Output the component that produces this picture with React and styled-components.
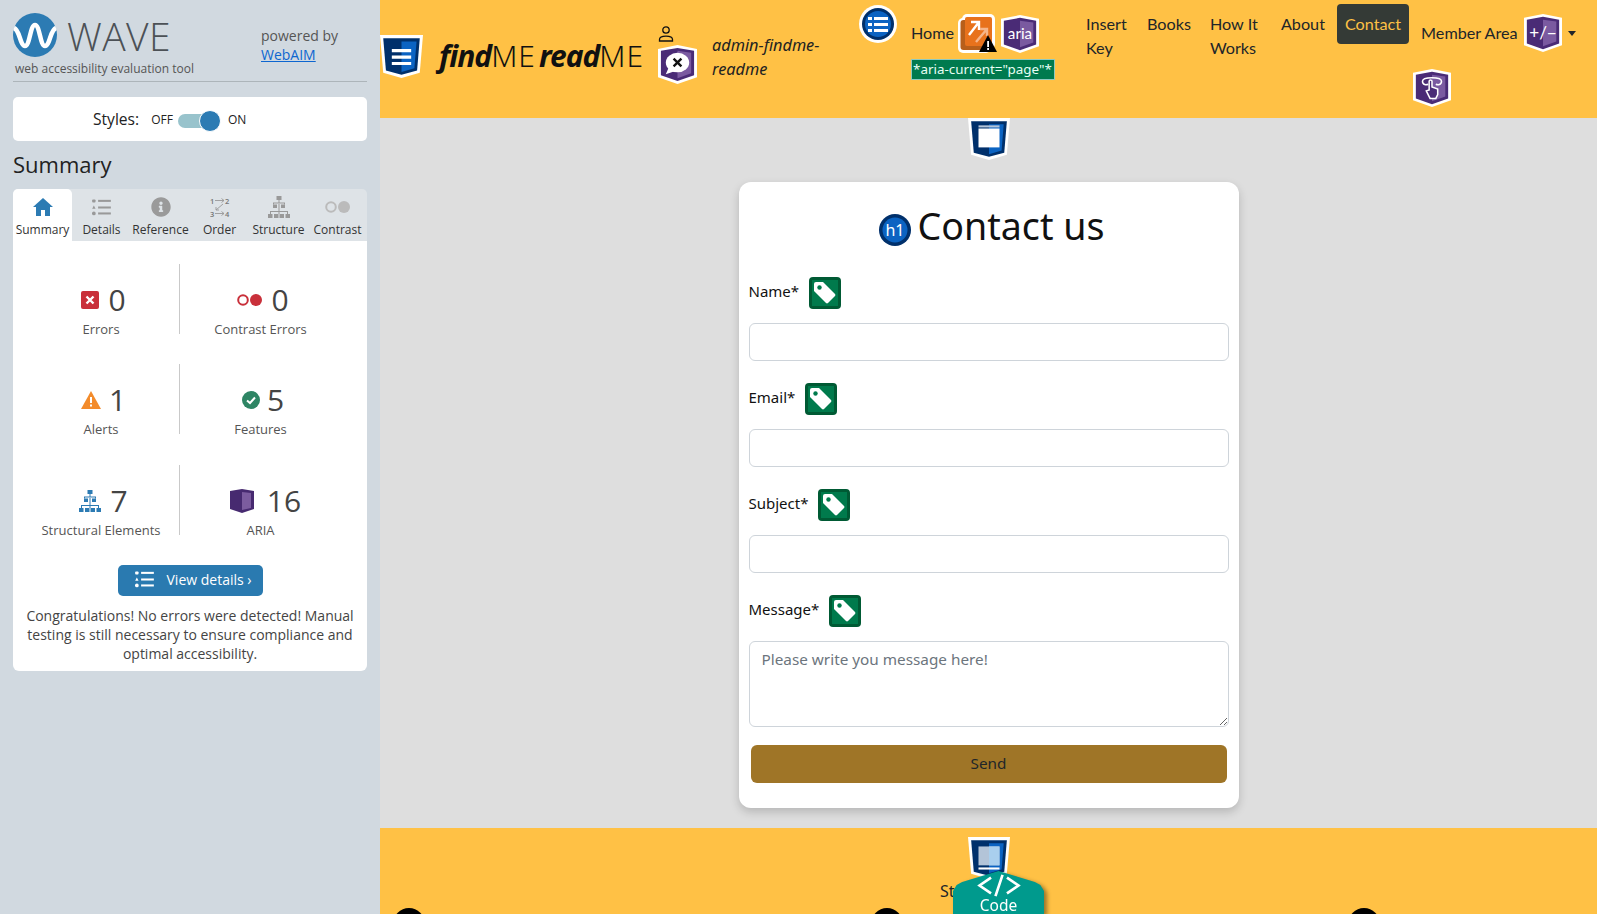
import React from 'react';
import styled, { createGlobalStyle } from 'styled-components';
import { FaInfoCircle } from 'react-icons/fa';

const GlobalStyle = createGlobalStyle`
    html, body {
        margin: 0;
        padding: 0;
        height: 914px;
        overflow: hidden;
    }
    * { box-sizing: border-box; }
    svg { flex-shrink: 0; }
`;

const Page = styled.div`
    display: flex;
    width: 1597px;
    height: 914px;
    overflow: hidden;
`;

// WAVE sidebar
const Sidebar = styled.aside`
    width: 380px;
    flex-shrink: 0;
    padding: 13px 13px 0;
    background: #d1d9e0;
    font-family: "Open Sans", sans-serif;
    color: #333;
`;

const Masthead = styled.div`
    display: flex;
    height: 69px;
    border-bottom: 1px solid #adb5ba;
`;

const LogoBlock = styled.div`
    width: 248px;
`;

const LogoRow = styled.div`
    display: flex;
    align-items: center;
    gap: 10px;
    height: 44px;
`;

const WaveWord = styled.span`
    margin-top: 2px;
    font-size: 39px;
    font-weight: 300;
    line-height: 44px;
    letter-spacing: 0.4px;
    color: #4c5156;
`;

const Tagline = styled.div`
    margin: 3px 0 0 2px;
    font-size: 12px;
    line-height: 18px;
    color: #555;
`;

const Powered = styled.div`
    padding-top: 13px;
    font-size: 14px;
    line-height: 19px;
    color: #555;
`;

const PoweredLink = styled.a`
    display: block;
    color: #0d66d0;
    text-decoration: underline;
`;

const StylesBox = styled.div`
    display: flex;
    align-items: center;
    height: 44px;
    margin-top: 15px;
    padding-left: 80px;
    background: #fff;
    border-radius: 5px;
    color: #222;
`;

const StylesLabel = styled.span`
    font-size: 15.6px;
    margin-right: 12px;
`;

const SwitchText = styled.span`
    font-size: 12px;
`;

const SwitchTrack = styled.span`
    position: relative;
    width: 38px;
    height: 14px;
    margin: 3px 12px 0 5px;
    border-radius: 7px;
    background: #98c3cc;
`;

const SwitchKnob = styled.span`
    position: absolute;
    right: -5px;
    top: -4px;
    width: 22px;
    height: 22px;
    border: 1px solid #fff;
    border-radius: 50%;
    background: #2c7bb3;
`;

const PanelTitle = styled.h2`
    margin: 8px 0 10px;
    font-size: 22px;
    font-weight: 400;
    line-height: 30px;
    color: #222;
`;

const TabBar = styled.div`
    display: grid;
    grid-template-columns: repeat(6, 59px);
    height: 52px;
    background: #dee3e7;
    border-radius: 5px 5px 0 0;
`;

const Tab = styled.div`
    display: flex;
    flex-direction: column;
    align-items: center;
    background: ${p => (p.$active ? '#fff' : 'transparent')};
    border-radius: ${p => (p.$active ? '5px 5px 0 0' : '0')};
    white-space: nowrap;
`;

const TabIcon = styled.div`
    display: flex;
    align-items: center;
    justify-content: center;
    height: 26px;
    margin-top: 5px;
    color: #9a9a9a;
`;

const TabLabel = styled.span`
    margin-top: 1px;
    font-size: 12px;
    line-height: 18px;
    color: #333;
`;

const SummaryBody = styled.div`
    padding: 23px 0 8px;
    background: #fff;
    border-radius: 0 0 6px 6px;
`;

const StatGrid = styled.div`
    display: grid;
    grid-template-columns: 156px 162px;
    grid-auto-rows: 70px;
    row-gap: 30.3px;
    padding-left: 10px;
    margin-bottom: 0.4px;
`;

const StatCell = styled.div`
    display: flex;
    flex-direction: column;
    align-items: center;
    padding-top: 18px;
    border-left: ${p => (p.$divider ? '1px solid #c9c9c9' : 'none')};
`;

const StatValue = styled.div`
    display: flex;
    align-items: center;
    gap: ${p => p.$gap || 9}px;
    height: 36px;
    margin-left: ${p => p.$shift || 5}px;
    font-size: 30px;
    line-height: 36px;
    color: #444;
`;

const StatLabel = styled.div`
    margin-top: 2px;
    font-size: 13px;
    line-height: 18px;
    white-space: nowrap;
    color: #555;
`;

const DetailsButton = styled.button`
    display: flex;
    align-items: center;
    gap: 13px;
    width: 145px;
    height: 31px;
    margin: 30px auto 0;
    padding: 0 0 2px 17px;
    border: 0;
    border-radius: 5px;
    background: #2a7ab0;
    color: #fff;
    font-family: "Open Sans", sans-serif;
    font-size: 14px;
`;

const Congrats = styled.p`
    margin: 10px 0 0;
    padding: 0 10px;
    font-size: 14px;
    line-height: 19px;
    text-align: center;
    color: #444;
`;

// page under test
const Main = styled.main`
    flex: 1;
    min-width: 0;
    overflow: hidden;
    position: relative;
    background: #dedede;
    font-family: "Noto Sans", sans-serif;
    color: #212529;
`;

const Header = styled.header`
    display: flex;
    align-items: flex-start;
    height: 118px;
    background: #ffc145;
`;

const Brand = styled.div`
    display: flex;
    align-items: center;
    gap: 16px;
    width: 260px;
    height: 43px;
    margin-top: 35px;
`;

const BrandText = styled.span`
    margin-top: -3px;
    font-size: 30px;
    color: #111;
    white-space: nowrap;
`;

const BrandStrong = styled.b`
    font-style: italic;
    font-weight: 700;
    letter-spacing: -1px;
    margin-left: ${p => p.$gap || 0}px;
`;

const BrandLight = styled.span`
    font-weight: 300;
    letter-spacing: 1px;
`;

const UserBlock = styled.div`
    display: flex;
    width: 201px;
    margin: 26px 0 0 18px;
`;

const UserIcons = styled.div`
    display: flex;
    flex-direction: column;
    gap: 3px;
    width: 54px;
`;

const UserName = styled.em`
    width: 125px;
    margin-top: 7px;
    font-size: 16.3px;
    line-height: 24px;
    color: #222;
`;

const Nav = styled.nav`
    display: flex;
    align-items: flex-start;
    font-family: Lato, sans-serif;
    font-size: 16.2px;
    line-height: 24px;
    color: #212529;
`;

const ListBadge = styled.span`
    margin: 5px 14px 0 0;
    display: flex;
`;

const HomeItem = styled.div`
    display: flex;
    flex-direction: column;
    align-items: flex-start;
    width: 144px;
    margin-right: 23px;
    padding-top: 14px;
`;

const HomeRow = styled.div`
    display: flex;
    align-items: center;
    gap: 4px;
`;

const NavText = styled.span`
    margin-top: -1px;
`;

const CurrentTag = styled.span`
    margin-top: 6px;
    padding: 0 1px;
    height: 21px;
    width: 144px;
    background: #007a4e;
    border: 1px solid #8fc9c0;
    color: #e8fff5;
    font-family: "Noto Sans", sans-serif;
    font-size: 13.4px;
    line-height: 18px;
    white-space: nowrap;
`;

const NavLink = styled.a`
    display: block;
    max-width: ${p => p.$maxWidth || 'none'};
    padding: 12px 8px 0;
    margin-right: 3px;
`;

const ContactLink = styled.a`
    height: 40px;
    margin: 4px 0 0 1px;
    padding: 8px 8px 0;
    border-radius: 4px;
    background: #343a36;
    color: #ffc145;
`;

const MemberItem = styled.div`
    position: relative;
    display: flex;
    align-items: center;
    gap: 6px;
    margin: 14px 0 0 12px;
    white-space: nowrap;
`;

const TouchBadge = styled.span`
    position: absolute;
    left: -8px;
    top: 55px;
    display: flex;
`;

const Caret = styled.span`
    width: 0;
    height: 0;
    border-top: 5px solid #212529;
    border-left: 4px solid transparent;
    border-right: 4px solid transparent;
`;

const ContactSection = styled.section`
    display: flex;
    flex-direction: column;
    align-items: center;
    height: 710px;
`;

const Card = styled.div`
    width: 500px;
    height: 626px;
    margin-top: 22px;
    padding: 0 10px;
    background: #fff;
    border-radius: 12px;
    box-shadow: 0 4px 10px rgba(0, 0, 0, 0.18);
`;

const Title = styled.h1`
    display: flex;
    align-items: center;
    justify-content: center;
    gap: 7px;
    height: 95px;
    margin: 0;
    padding: 0 0 8px 6px;
    font-size: 37.6px;
    font-weight: 400;
    color: #111;
`;

const TitleBadge = styled.span`
    display: flex;
    margin-top: 9px;
`;

const FieldGroup = styled.div`
    margin-bottom: 22px;
`;

const LabelRow = styled.div`
    display: flex;
    align-items: center;
    gap: 10px;
    height: 32px;
    margin-bottom: 14px;
`;

const LabelText = styled.label`
    margin-top: -4px;
    font-size: 15px;
    color: #111;
`;

const TextInput = styled.input`
    display: block;
    width: 480px;
    height: 38px;
    border: 1px solid #ced4da;
    border-radius: 6px;
    background: #fff;
`;

const MessageInput = styled.textarea`
    display: block;
    width: 480px;
    height: 86px;
    padding: 6px 12px;
    border: 1px solid #ced4da;
    border-radius: 6px;
    font-family: "Noto Sans", sans-serif;
    font-size: 15.3px;
    line-height: 23px;
    &::placeholder { color: #6c757d; opacity: 1; }
`;

const SendButton = styled.button`
    display: block;
    width: 476px;
    height: 38px;
    margin: -4px 0 0 2px;
    padding: 0 0 2px;
    border: 0;
    border-radius: 6px;
    background: #9f7527;
    color: #212529;
    font-family: "Noto Sans", sans-serif;
    font-size: 15.3px;
`;

const Footer = styled.footer`
    display: flex;
    flex-direction: column;
    align-items: center;
    height: 200px;
    padding-top: 9px;
    background: #ffc145;
`;

const FooterHeading = styled.div`
    font-size: 16px;
    line-height: 24px;
    color: #212529;
    white-space: nowrap;
`;

const FooterColumns = styled.div`
    align-self: flex-start;
    display: grid;
    grid-template-columns: repeat(3, 477.5px);
    margin: 5px 0 0 13px;
`;

const SocialDot = styled.span`
    display: block;
    width: 32px;
    height: 32px;
    border-radius: 50%;
    background: #000;
`;

const CodeWrap = styled.div`
    position: absolute;
    left: 573px;
    top: 871px;
    width: 91px;
    height: 43px;
    filter: drop-shadow(3px 2px 2px rgba(0, 0, 0, 0.4));
`;

const CodeTab = styled.div`
    display: flex;
    flex-direction: column;
    align-items: center;
    height: 100%;
    padding-top: 3px;
    background: #009a8d;
    clip-path: polygon(50% 0, 90% 11px, 96% 14px, 100% 20px, 100% 100%, 0 100%, 0 20px, 4% 14px, 10% 11px);
    color: #fff;
    font-size: 15.5px;
    line-height: 17px;
`;

const Shield = ({ size = 38, dark, light, peak, children }) => (
    <svg width={size} height={size} viewBox="0 0 40 40">
        {peak ? (
            <>
                <path d="M0 4 L20 0 L40 4 V33 L20 40 L0 33Z" fill="#fff" />
                <path d="M3 6 L20 3 L37 6 V31 L20 37 L3 31Z" fill={dark} />
                <path d="M20 6 L34 8 V29 L20 34Z" fill={light} />
            </>
        ) : (
            <>
                <path d="M0 0 H40 L37 35 L20 40 L3 35Z" fill="#fff" />
                <path d="M3 3 H37 L34.5 33 L20 37 L5.5 33Z" fill={dark} />
                <path d="M20 6 H34 L32 31 L20 34.5Z" fill={light} />
            </>
        )}
        {children}
    </svg>
);

const Navy = { dark: '#00306b', light: '#0b63c2' };
const Purple = { dark: '#4a2b76', light: '#7a5aa0', peak: true };

const TagBadge = () => (
    <svg width="32" height="32" viewBox="0 0 32 32">
        <rect width="32" height="32" rx="4" fill="#005a34" />
        <rect x="3" y="3" width="26" height="26" fill="#007a4c" />
        <path d="M5 7 a2 2 0 0 1 2-2 h7 L26 17 a1.5 1.5 0 0 1 0 2 L19 26 a1.5 1.5 0 0 1 -2 0 L5 14Z" fill="#fff" />
        <circle cx="10.5" cy="10.5" r="2.2" fill="#007a4c" />
    </svg>
);

const Tree = ({ size = 22, color = '#999' }) => (
    <svg width={size} height={size} viewBox="0 0 22 22" fill={color}>
        <rect x="8.5" y="0" width="5" height="4" />
        <rect x="5" y="8.5" width="4" height="3.5" />
        <rect x="13" y="8.5" width="4" height="3.5" />
        <rect x="0" y="18" width="4.5" height="4" />
        <rect x="6" y="18" width="4.5" height="4" />
        <rect x="11.5" y="18" width="4.5" height="4" />
        <rect x="17.5" y="18" width="4.5" height="4" />
        <path d="M10.5 4 h1 v2.5 h5.5 v2 h-1 v-1 h-10 v1 h-1 v-2 h5.5z M2 15 h18 v3 h-1 v-2 h-7.5 v2 h-1 v-2 h-7.5 v2 h-1z M10.5 8 h1 v8 h-1z" />
    </svg>
);

const ListIcon = ({ color = '#999', width = 19, height = 17 }) => (
    <svg width={width} height={height} viewBox="0 0 22 20" fill={color}>
        <rect x="0" y="0.5" width="4" height="3.5" rx="1" />
        <rect x="7" y="1" width="15" height="2.4" />
        <path d="M2 7.5 L4 11.5 H0Z" />
        <rect x="7" y="8.8" width="15" height="2.4" />
        <circle cx="2" cy="17" r="2.2" />
        <rect x="7" y="15.8" width="15" height="2.4" />
    </svg>
);

const HomeIcon = () => (
    <svg width="20" height="18" viewBox="0 0 20 18" fill="#2c7bb3">
        <path d="M10 0 L20 9 H0Z" />
        <path d="M3 9 H17 V18 H12 V12 H8 V18 H3Z" />
    </svg>
);

const OrderIcon = () => (
    <svg width="20" height="20" viewBox="0 0 20 20" fontFamily="Open Sans, sans-serif" fontSize="7.5" fontWeight="600" fill="#777">
        <text x="0" y="6.5">1</text>
        <text x="15" y="6.5">2</text>
        <text x="0" y="19.5">3</text>
        <text x="15" y="19.5">4</text>
        <path d="M5 3.5 H14 M11.5 1.5 L14 3.5 L11.5 5.5 M5 16.5 H14 M11.5 14.5 L14 16.5 L11.5 18.5 M13 7 L6 13 M6 10 V13 H9" stroke="#999" strokeWidth="0.9" fill="none" />
    </svg>
);

const ContrastIcon = ({ color = '#bbb', colorFill = '#bbb', width = 25 }) => (
    <svg width={width} height={(width * 12) / 25} viewBox="0 0 25 12">
        <circle cx="6" cy="6" r="4.8" fill="none" stroke={color} strokeWidth="2" />
        <circle cx="19" cy="6" r="6" fill={colorFill} />
    </svg>
);

const WaveLogo = () => (
    <svg width="44" height="44" viewBox="0 0 44 44">
        <circle cx="22" cy="22" r="22" fill="#2c7bb3" />
        <path d="M1 15 C7 17 7 33 12 33 C17 33 17 12 22 12 C27 12 27 33 32 33 C37 33 37 17 43 15" stroke="#fff" strokeWidth="4.5" fill="none" />
    </svg>
);

const stats = [
    { value: 0, label: 'Errors', icon: (
        <svg width="18" height="18" viewBox="0 0 18 18">
            <rect width="18" height="18" rx="2" fill="#c9303a" />
            <path d="M5.5 5.5 L12.5 12.5 M12.5 5.5 L5.5 12.5" stroke="#fff" strokeWidth="2.4" />
        </svg>
    ) },
    { value: 0, label: 'Contrast Errors', divider: true, icon: <ContrastIcon color="#c9303a" colorFill="#c9303a" /> },
    { value: 1, label: 'Alerts', gap: 8, icon: (
        <svg width="20" height="18" viewBox="0 0 20 18">
            <path d="M10 0 L20 18 H0Z" fill="#f38b2b" />
            <rect x="9" y="6" width="2" height="6" fill="#fff" />
            <rect x="9" y="13.5" width="2" height="2" fill="#fff" />
        </svg>
    ) },
    { value: 5, label: 'Features', divider: true, gap: 7, icon: (
        <svg width="18" height="18" viewBox="0 0 18 18">
            <circle cx="9" cy="9" r="9" fill="#2e8564" />
            <path d="M5 9.5 L8 12 L13 6.5" stroke="#fff" strokeWidth="2" fill="none" />
        </svg>
    ) },
    { value: 7, label: 'Structural Elements', icon: <Tree color="#2c7bb3" /> },
    { value: 16, label: 'ARIA', divider: true, gap: 13, shift: 10, icon: (
        <svg width="24" height="24" viewBox="0 0 24 24">
            <path d="M0 2 L12 0 L24 2 V20 L12 24 L0 20Z" fill="#472a70" />
            <path d="M12 3 L21 4 V19 L12 21Z" fill="#7c5c9f" />
        </svg>
    ) },
];

const tabs = [
    { label: 'Summary', active: true, icon: <HomeIcon /> },
    { label: 'Details', icon: <ListIcon /> },
    { label: 'Reference', icon: <FaInfoCircle size={20} /> },
    { label: 'Order', icon: <OrderIcon /> },
    { label: 'Structure', icon: <Tree /> },
    { label: 'Contrast', icon: <ContrastIcon /> },
];

const fields = ['Name*', 'Email*', 'Subject*'];

const App = () => {
    return (
        <Page>
            <GlobalStyle />
            <Sidebar>
                <Masthead>
                    <LogoBlock>
                        <LogoRow>
                            <WaveLogo />
                            <WaveWord>WAVE</WaveWord>
                        </LogoRow>
                        <Tagline>web accessibility evaluation tool</Tagline>
                    </LogoBlock>
                    <Powered>
                        powered by
                        <PoweredLink href="#">WebAIM</PoweredLink>
                    </Powered>
                </Masthead>

                <StylesBox>
                    <StylesLabel>Styles:</StylesLabel>
                    <SwitchText>OFF</SwitchText>
                    <SwitchTrack><SwitchKnob /></SwitchTrack>
                    <SwitchText>ON</SwitchText>
                </StylesBox>

                <PanelTitle>Summary</PanelTitle>

                <TabBar>
                    {tabs.map(tab => (
                        <Tab key={tab.label} $active={tab.active}>
                            <TabIcon>{tab.icon}</TabIcon>
                            <TabLabel>{tab.label}</TabLabel>
                        </Tab>
                    ))}
                </TabBar>

                <SummaryBody>
                    <StatGrid>
                        {stats.map(stat => (
                            <StatCell key={stat.label} $divider={stat.divider}>
                                <StatValue $gap={stat.gap} $shift={stat.shift}>{stat.icon}{stat.value}</StatValue>
                                <StatLabel>{stat.label}</StatLabel>
                            </StatCell>
                        ))}
                    </StatGrid>
                    <DetailsButton>
                        <ListIcon color="#fff" />
                        View details ›
                    </DetailsButton>
                    <Congrats>
                        Congratulations! No errors were detected! Manual testing is still necessary to ensure compliance and optimal accessibility.
                    </Congrats>
                </SummaryBody>
            </Sidebar>

            <Main>
                <Header>
                    <Brand>
                        <Shield size={43} {...Navy}>
                            <path d="M11 13 H29 V16 H11Z M11 19 H29 V22 H11Z M11 25 H29 V28 H11Z" fill="#fff" />
                        </Shield>
                        <BrandText>
                            <BrandStrong>find</BrandStrong><BrandLight>ME</BrandLight>
                            <BrandStrong $gap={3}>read</BrandStrong><BrandLight>ME</BrandLight>
                        </BrandText>
                    </Brand>

                    <UserBlock>
                        <UserIcons>
                            <svg width="16" height="16" viewBox="0 0 16 16" fill="none" stroke="#111" strokeWidth="1.3">
                                <circle cx="8" cy="4" r="3.2" />
                                <path d="M1.5 15 V13.5 C1.5 9 14.5 9 14.5 13.5 V15Z" />
                            </svg>
                            <Shield size={39} {...Purple}>
                                <ellipse cx="20" cy="18" rx="12" ry="10" fill="#fff" />
                                <path d="M11 23 L8 30 L17 27Z" fill="#fff" />
                                <path d="M16 14 L24 22 M24 14 L16 22" stroke="#111" strokeWidth="2.4" />
                            </Shield>
                        </UserIcons>
                        <UserName>admin-findme-readme</UserName>
                    </UserBlock>

                    <Nav>
                        <ListBadge>
                            <svg width="38" height="38" viewBox="0 0 38 38">
                                <circle cx="19" cy="19" r="19" fill="#fff" />
                                <circle cx="19" cy="19" r="16" fill="#00306b" />
                                <circle cx="19" cy="19" r="13" fill="#0b63c2" />
                                <path d="M9 12 h4 v3 h-4z M15 12 h14 v3 h-14z M9 18 h4 v3 h-4z M15 18 h14 v3 h-14z M9 24 h4 v3 h-4z M15 24 h14 v3 h-14z" fill="#fff" />
                            </svg>
                        </ListBadge>

                        <HomeItem>
                            <HomeRow>
                                <NavText>Home</NavText>
                                <svg width="39" height="39" viewBox="0 0 39 39">
                                    <rect x="0" y="4" width="33" height="35" rx="5" fill="#fff" />
                                    <rect x="4" y="0" width="33" height="35" rx="5" fill="#fff" />
                                    <rect x="2.5" y="6" width="29" height="30" rx="3" fill="#b85f1a" />
                                    <rect x="7" y="3" width="27" height="29" rx="2" fill="#e8721c" />
                                    <path d="M11 21 L21 8 M13 8 H21 V16" stroke="#fff" strokeWidth="2.4" fill="none" />
                                    <path d="M18 28 L29 15 M22 15 H29 V22" stroke="#f5b58a" strokeWidth="2.4" fill="none" />
                                    <path d="M30 21 L39 38 H21Z" fill="#000" />
                                    <rect x="29.2" y="27" width="1.8" height="6" fill="#fff" />
                                    <rect x="29.2" y="34" width="1.8" height="2" fill="#fff" />
                                </svg>
                                <Shield size={38} {...Purple}>
                                    <text x="20" y="25" textAnchor="middle" fill="#fff" fontFamily="Lato, sans-serif" fontSize="16">aria</text>
                                </Shield>
                            </HomeRow>
                            <CurrentTag>*aria-current="page"*</CurrentTag>
                        </HomeItem>

                        <NavLink $maxWidth="58px">Insert Key</NavLink>
                        <NavLink>Books</NavLink>
                        <NavLink $maxWidth="68px">How It Works</NavLink>
                        <NavLink>About</NavLink>
                        <ContactLink>Contact</ContactLink>

                        <MemberItem>
                            <NavText>Member Area</NavText>
                            <Shield size={38} {...Purple}>
                                <text x="20" y="26" textAnchor="middle" fill="#fff" fontFamily="Lato, sans-serif" fontSize="18">+/−</text>
                            </Shield>
                            <Caret />
                            <TouchBadge>
                                <Shield size={38} {...Purple}>
                                    <path d="M10 13 C10 8 30 8 30 13 C30 17 26 17 24 16 M10 13 C10 17 14 17 16 16" stroke="#fff" strokeWidth="1.6" fill="none" />
                                    <path d="M17 29 L14 23 L17 22 V13 C17 11 20 11 20 13 V19 L26 21 V27 L24 31 H18Z" fill="#4a2b76" stroke="#fff" strokeWidth="1.6" />
                                </Shield>
                            </TouchBadge>
                        </MemberItem>
                    </Nav>
                </Header>

                <ContactSection>
                    <Shield size={42} {...Navy}>
                        <rect x="10" y="10" width="20" height="18" fill="#fff" />
                        <rect x="10" y="7" width="20" height="2" fill="#b3c4d8" />
                    </Shield>
                    <Card>
                        <Title>
                            <TitleBadge>
                                <svg width="32" height="32" viewBox="0 0 32 32">
                                    <circle cx="16" cy="16" r="16" fill="#00306b" />
                                    <circle cx="16" cy="16" r="12.5" fill="#0b63c2" />
                                    <text x="16" y="22" textAnchor="middle" fill="#fff" fontFamily="Noto Sans, sans-serif" fontSize="16">h1</text>
                                </svg>
                            </TitleBadge>
                            Contact us
                        </Title>

                        {fields.map(field => (
                            <FieldGroup key={field}>
                                <LabelRow><LabelText>{field}</LabelText><TagBadge /></LabelRow>
                                <TextInput />
                            </FieldGroup>
                        ))}
                        <FieldGroup>
                            <LabelRow><LabelText>Message*</LabelText><TagBadge /></LabelRow>
                            <MessageInput placeholder="Please write you message here!" />
                        </FieldGroup>
                        <SendButton>Send</SendButton>
                    </Card>
                </ContactSection>

                <Footer>
                    <Shield size={42} {...Navy}>
                        <rect x="10" y="9" width="20" height="18" fill="#b3c4d8" />
                        <rect x="20" y="9" width="10" height="18" fill="#a9cfee" />
                        <rect x="10" y="29" width="20" height="2" fill="#fff" />
                    </Shield>
                    <FooterHeading>Stay in touch</FooterHeading>
                    <FooterColumns>
                        <SocialDot />
                        <SocialDot />
                        <SocialDot />
                    </FooterColumns>
                </Footer>

                <CodeWrap>
                    <CodeTab>
                        <svg width="50" height="23" viewBox="0 0 50 26" fill="none" stroke="#fff" strokeWidth="3">
                            <path d="M16 4 L3 13 L16 22 M34 4 L47 13 L34 22 M29 1 L21 25" />
                        </svg>
                        Code
                    </CodeTab>
                </CodeWrap>
            </Main>
        </Page>
    );
};

export default App;
